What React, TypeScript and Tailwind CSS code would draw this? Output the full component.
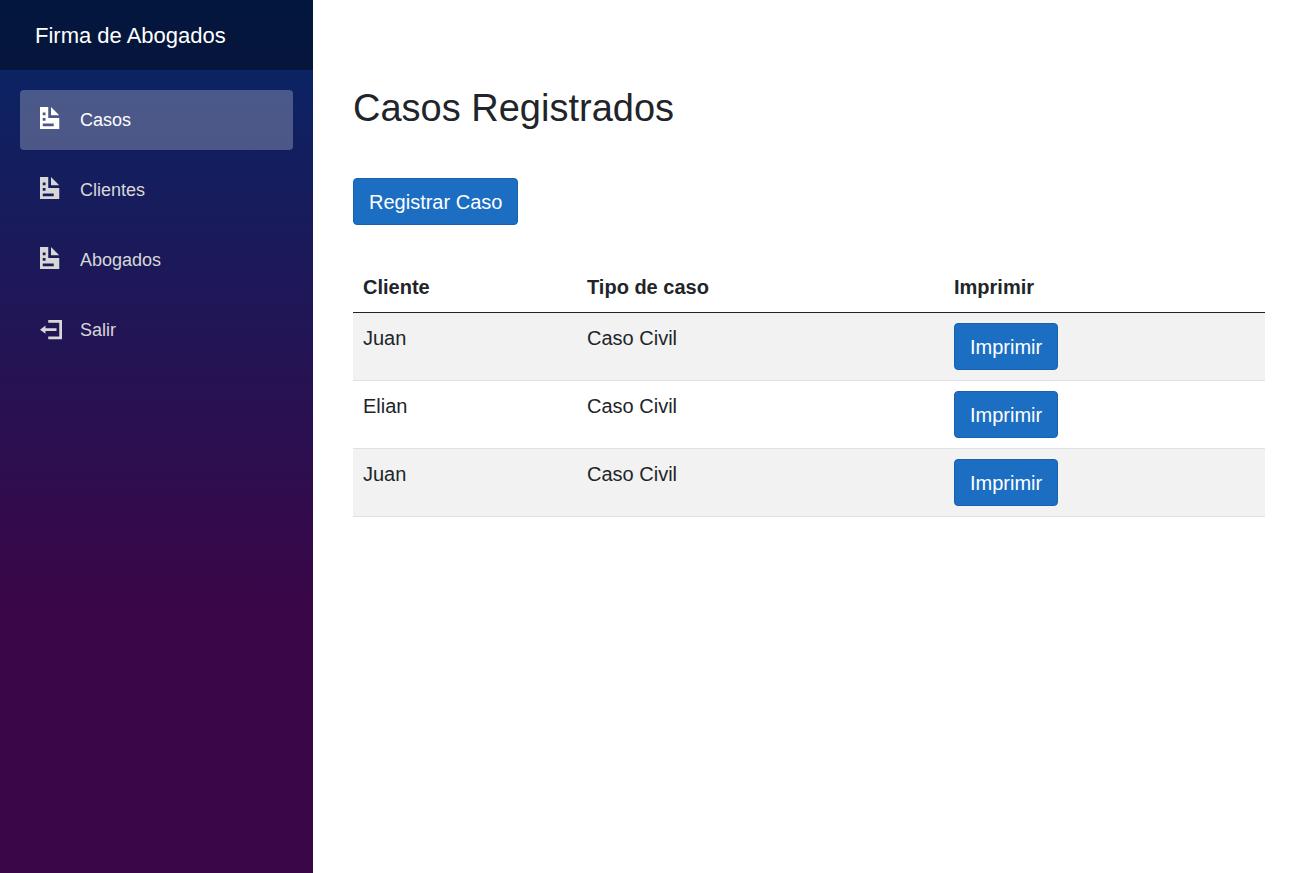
import React from "react";

// open-iconic glyphs
const FileIcon = () => (
  <svg width="22" height="22" viewBox="0 0 8 8" className="shrink-0 mb-[4px]">
    <path
      fill="currentColor"
      d="M0 0v8h7v-4h-4v-4h-3zm4 0v3h3l-3-3zm-3 2h1v1h-1v-1zm0 2h1v1h-1v-1zm0 2h4v1h-4v-1z"
    />
  </svg>
);

const ExitIcon = () => (
  <svg width="22" height="22" viewBox="0 0 8 8" className="shrink-0 mt-[2px]">
    <path fill="currentColor" d="M3 0v1h4v5h-4v1h5v-7h-5zm-1 2l-2 1.5 2 1.5v-1h4v-1h-4v-1z" />
  </svg>
);

const navItems = [
  { label: "Casos", active: true },
  { label: "Clientes", active: false },
  { label: "Abogados", active: false },
  { label: "Salir", active: false, exit: true },
];

const rows = [
  { cliente: "Juan", tipo: "Caso Civil" },
  { cliente: "Elian", tipo: "Caso Civil" },
  { cliente: "Juan", tipo: "Caso Civil" },
];

const Button = ({ children }: { children: React.ReactNode }) => (
  <button className="h-[47px] px-[15px] rounded bg-[#1b6ec2] border border-[#1861ac] text-white text-[20px] leading-[30px]">
    {children}
  </button>
);

const App = () => {
  return (
    <div className="flex min-h-[873px] bg-white text-[#212529] font-['Liberation_Sans',Arial,sans-serif]">
      {/* Sidebar */}
      <aside className="w-[313px] shrink-0 bg-[linear-gradient(180deg,#052767_0%,#3a0647_70%)] flex flex-col">
        <div className="h-[70px] bg-black/40 flex items-center pl-[35px] text-white text-[22px]">
          Firma de Abogados
        </div>
        <nav className="flex flex-col pt-[20px] px-[20px] gap-[10px]">
          {navItems.map((item) => (
            <a
              key={item.label}
              href="#"
              className={
                item.active
                  ? "h-[60px] flex items-center pl-[20px] gap-[18px] rounded bg-white/25 text-white text-[18px]"
                  : "h-[60px] flex items-center pl-[20px] gap-[18px] rounded text-[#d7d7d7] text-[18px]"
              }
            >
              {item.exit ? <ExitIcon /> : <FileIcon />}
              <span>{item.label}</span>
            </a>
          ))}
        </nav>
      </aside>

      {/* Content */}
      <main className="flex-1 pl-[40px] pr-[30px] pt-[84px]">
        <h1 className="text-[38px] leading-[48px] mb-[46px]">Casos Registrados</h1>
        <Button>Registrar Caso</Button>
        <table className="w-full mt-[37px] border-collapse text-[20px] leading-[30px] table-fixed">
          <thead>
            <tr className="border-b border-[#212529]">
              <th className="w-[224px] p-[10px] text-left font-bold">Cliente</th>
              <th className="w-[367px] p-[10px] text-left font-bold">Tipo de caso</th>
              <th className="p-[10px] text-left font-bold">Imprimir</th>
            </tr>
          </thead>
          <tbody>
            {rows.map((row, i) => (
              <tr
                key={i}
                className={i % 2 === 0 ? "bg-[#f2f2f2] border-b border-[#dee2e6]" : "border-b border-[#dee2e6]"}
              >
                <td className="p-[10px] align-top">{row.cliente}</td>
                <td className="p-[10px] align-top">{row.tipo}</td>
                <td className="p-[10px] align-top">
                  <Button>Imprimir</Button>
                </td>
              </tr>
            ))}
          </tbody>
        </table>
      </main>
    </div>
  );
};

export default App;
